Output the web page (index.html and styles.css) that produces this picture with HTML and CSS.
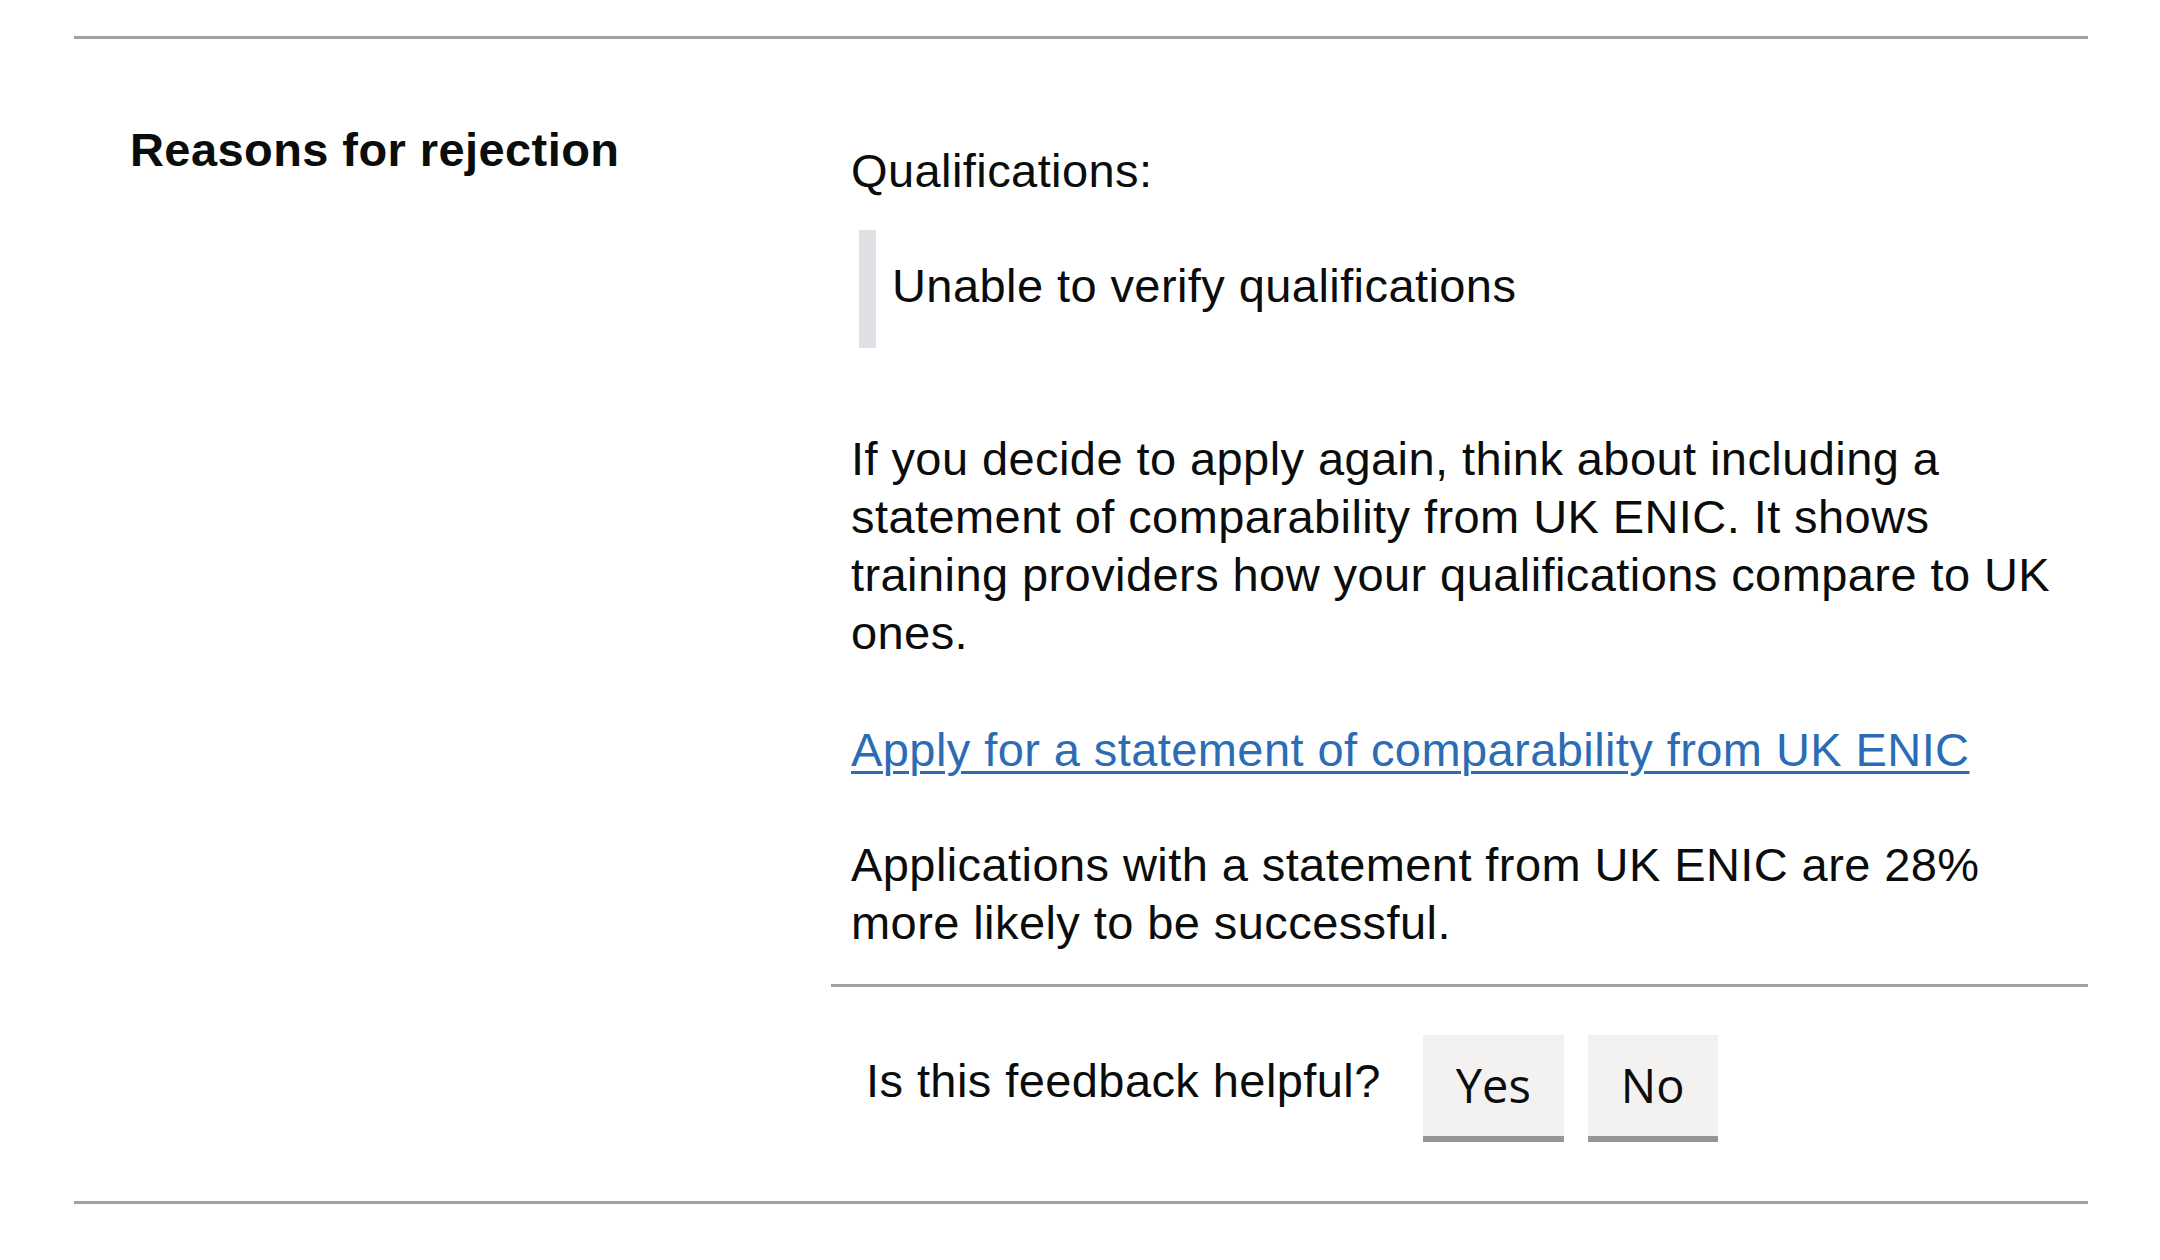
FILE: index.html
```html
<!DOCTYPE html>
<html lang="en">
<head>
<meta charset="utf-8">
<title>Reasons for rejection</title>
<link rel="stylesheet" href="styles.css">
</head>
<body>
<div class="summary">
  <div class="row">
    <dt class="key">Reasons for rejection</dt>
    <dd class="value">
      <div class="value-body">
        <p class="label">Qualifications:</p>
        <div class="inset">Unable to verify qualifications</div>
        <p class="para">If you decide to apply again, think about including a statement of comparability from UK ENIC. It shows training providers how your qualifications compare to UK ones.</p>
        <p class="para link-para"><a class="link" href="#">Apply for a statement of comparability from UK ENIC</a></p>
        <p class="para last">Applications with a statement from UK ENIC are 28% more likely to be successful.</p>
      </div>
      <div class="feedback">
        <span class="feedback-q">Is this feedback helpful?</span>
        <button class="btn" type="button">Yes</button>
        <button class="btn" type="button">No</button>
      </div>
    </dd>
  </div>
</div>
</body>
</html>
```

FILE: styles.css
```css
html, body {
  margin: 0;
  padding: 0;
  background: #ffffff;
}

body {
  font-family: "Liberation Sans", Arial, sans-serif;
  font-size: 47px;
  line-height: 58px;
  letter-spacing: 0.42px;
  color: #0b0c0c;
}

.summary {
  margin: 36px 72px 0 74px;
  border-top: 3px solid #9da1a8;
  border-bottom: 3px solid #9da1a8;
}

.row {
  display: grid;
  grid-template-columns: 757px 1fr;
}

.key {
  margin: 0;
  padding: 82px 0 0 56px;
  font-weight: 700;
}

.value {
  margin: 0;
}

.value-body {
  padding: 103px 20px 32px 20px;
}

.label {
  margin: 0;
}

.inset {
  margin: 30px 0 0 8px;
  padding: 27px 0 33px 16px;
  border-left: 17px solid #dee0e3;
}

.para {
  margin: 82px 0 0 0;
}

.link-para {
  margin-top: 59px;
}

.para.last {
  margin-top: 57px;
}

.link {
  color: #2b6cb5;
  text-decoration: underline;
  text-decoration-thickness: 3px;
  text-underline-offset: 5px;
}

.feedback {
  display: flex;
  align-items: flex-start;
  gap: 24px;
  border-top: 3px solid #9da1a8;
  padding: 48px 0 65px 35px;
}

.feedback-q {
  margin-top: 17px;
  margin-right: 18px;
}

.btn {
  font-family: "Open Sans", "Noto Sans", sans-serif;
  font-size: 47px;
  line-height: 101px;
  letter-spacing: 0;
  height: 101px;
  padding: 0 33px;
  border: 0;
  border-radius: 0;
  background: #f3f2f1;
  color: #0b0c0c;
  box-shadow: 0 6px 0 #959595;
  cursor: pointer;
}
```
